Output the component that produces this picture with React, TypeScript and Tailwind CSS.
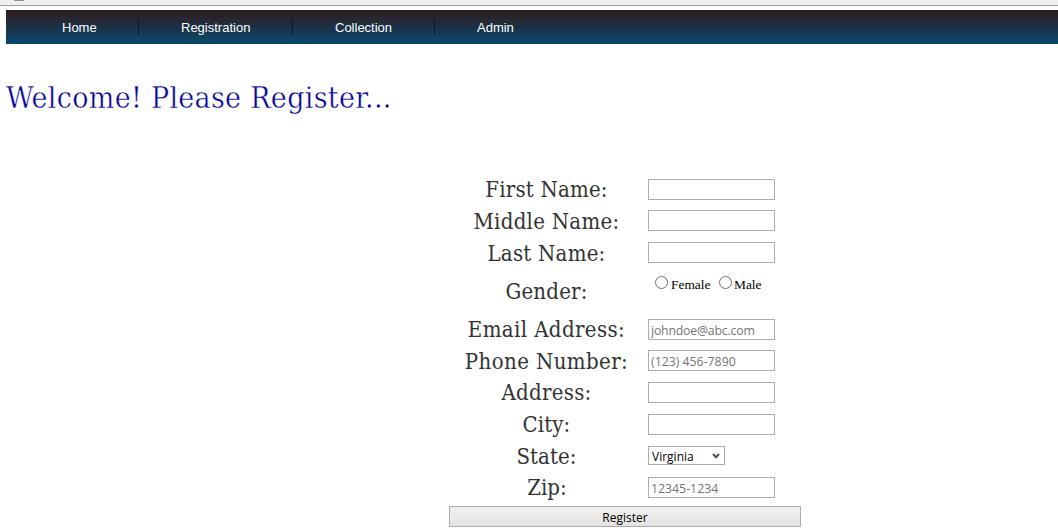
import type { ReactNode } from "react";

const fieldClass =
  "block h-[21px] w-[127px] rounded-none border border-[#abadb3] bg-white px-[2px] pt-[2px] font-['Open_Sans',sans-serif] text-[12.3px] leading-[17px] text-black outline-none placeholder:text-[#757575]";

function NavItem({ label, className }: { label: string; className: string }) {
  return (
    <li className={className}>
      <a href="#" className="block h-[17px] leading-[19px] text-white">
        {label}
      </a>
    </li>
  );
}

type RowProps = {
  label: string;
  height: string;
  labelClass: string;
  children: ReactNode;
};

function Row({ label, height, labelClass, children }: RowProps) {
  return (
    <div className={`flex items-start ${height}`}>
      <label
        className={`w-[195px] shrink-0 text-center font-['DejaVu_Serif_Condensed','DejaVu_Serif',serif] text-[22px] leading-[30px] whitespace-nowrap text-[#333333] ${labelClass}`}
      >
        {label}
      </label>
      <div className="ml-[4px] pt-[5px]">{children}</div>
    </div>
  );
}

function Radio({ label, labelClass }: { label: string; labelClass: string }) {
  return (
    <label className="flex h-[20px] items-start">
      <input
        type="radio"
        name="gender"
        className="mt-[2px] size-[13px] appearance-none rounded-full border border-[#707070] bg-white"
      />
      <span className={`pt-px leading-[20px] ${labelClass}`}>{label}</span>
    </label>
  );
}

export default function App() {
  return (
    <div className="h-[532px] w-full overflow-hidden bg-white">
      <div className="h-[6px] overflow-hidden border-b border-[#a0a0a0] bg-[#f0f0f0] pl-[14px]">
        <div className="h-px w-[10px] rounded-b-full bg-[#8a8a8a]" />
      </div>
      <nav className="mt-[4px] ml-[6px] h-[34px] bg-linear-to-b from-[#2d1a1c] via-[#1b3145] via-50% to-[#004a6e] pt-[8px] pl-[14px] font-['Liberation_Sans',sans-serif] text-[13px]">
        <ul className="flex">
          <NavItem label="Home" className="w-[119px] border-r border-[#0b1a26] pl-[42px]" />
          <NavItem label="Registration" className="w-[154px] border-r border-[#0b1a26] pl-[42px]" />
          <NavItem label="Collection" className="w-[142px] border-r border-[#0b1a26] pl-[42px]" />
          <NavItem label="Admin" className="px-[42px]" />
        </ul>
      </nav>
      <h1 className="mt-[34px] ml-[6px] h-[96px] font-['DejaVu_Serif_Condensed','DejaVu_Serif',serif] text-[30px] leading-[40px] tracking-[0.3px] whitespace-nowrap text-[#000099] [-webkit-text-stroke:0.4px_white]">
        Welcome! Please Register...
      </h1>
      <form className="ml-[449px] w-[352px]" onSubmit={(e) => e.preventDefault()}>
        <Row label="First Name:" height="h-[31px]" labelClass="pt-px tracking-[0.2px]">
          <input className={fieldClass} />
        </Row>
        <Row label="Middle Name:" height="h-[32px]" labelClass="pt-[2px] tracking-[0.28px]">
          <input className={fieldClass} />
        </Row>
        <Row label="Last Name:" height="h-[32px]" labelClass="pt-[2px] tracking-[0.25px]">
          <input className={fieldClass} />
        </Row>
        <Row label="Gender:" height="h-[45px]" labelClass="pt-[8px] tracking-[0.2px]">
          <div className="ml-[7px] flex gap-[8px] font-['Liberation_Serif',serif] text-[13.4px] text-black">
            <Radio label="Female" labelClass="ml-[3px] w-[40px]" />
            <Radio label="Male" labelClass="ml-[2px]" />
          </div>
        </Row>
        <Row label="Email Address:" height="h-[31px]" labelClass="pt-px tracking-[0.4px]">
          <input type="email" placeholder="johndoe@abc.com" className={`${fieldClass} tracking-[-0.2px]`} />
        </Row>
        <Row label="Phone Number:" height="h-[32px]" labelClass="pt-[2px] tracking-[0.4px]">
          <input type="tel" placeholder="(123) 456-7890" className={fieldClass} />
        </Row>
        <Row label="Address:" height="h-[32px]" labelClass="pt-px tracking-[0.3px]">
          <input className={fieldClass} />
        </Row>
        <Row label="City:" height="h-[32px]" labelClass="pt-px tracking-[0.1px]">
          <input className={fieldClass} />
        </Row>
        <Row label="State:" height="h-[31px]" labelClass="pt-px tracking-[0.1px]">
          <button
            type="button"
            className="flex h-[19px] w-[77px] items-center justify-between border border-[#abadb3] bg-white pr-[4px] pl-[3px] font-['Open_Sans',sans-serif] text-[12px] leading-[17px] text-black"
          >
            <span className="pt-px">Virginia</span>
            <svg className="mt-px" width="8" height="6" viewBox="0 0 8 6" fill="none" stroke="#505050" strokeWidth="2">
              <path d="M1 1 L4 4.2 L7 1" />
            </svg>
          </button>
        </Row>
        <Row label="Zip:" height="h-[34px]" labelClass="pt-px pl-px">
          <input placeholder="12345-1234" className={fieldClass} />
        </Row>
        <button
          type="submit"
          className="block h-[21px] w-[352px] border border-[#acacac] bg-linear-to-b from-[#f0f0f0] to-[#e3e3e3] text-center font-['Open_Sans',sans-serif] text-[12px] leading-[21px] text-black"
        >
          Register
        </button>
      </form>
    </div>
  );
}
